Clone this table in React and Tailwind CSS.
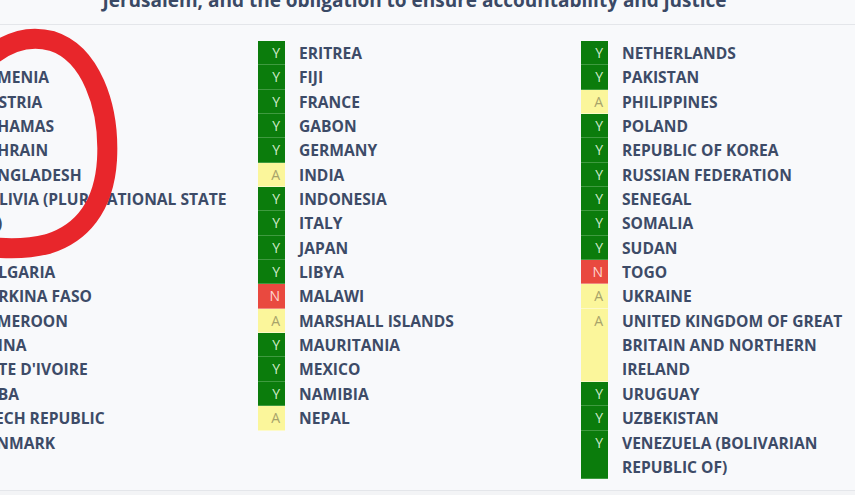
import React from "react";

const left = [
  { v: "Y", l: [""] },
  { v: "Y", l: ["ARMENIA"] },
  { v: "Y", l: ["AUSTRIA"] },
  { v: "Y", l: ["BAHAMAS"] },
  { v: "Y", l: ["BAHRAIN"] },
  { v: "Y", l: ["BANGLADESH"] },
  { v: "Y", l: ["BOLIVIA (PLURINATIONAL STATE", "OF)"] },
  { v: "Y", l: ["BRAZIL"] },
  { v: "Y", l: ["BULGARIA"] },
  { v: "Y", l: ["BURKINA FASO"] },
  { v: "Y", l: ["CAMEROON"] },
  { v: "Y", l: ["CHINA"] },
  { v: "Y", l: ["CÔTE D'IVOIRE"] },
  { v: "Y", l: ["CUBA"] },
  { v: "A", l: ["CZECH REPUBLIC"] },
  { v: "Y", l: ["DENMARK"] },
];

const middle = [
  { v: "Y", l: ["ERITREA"] },
  { v: "Y", l: ["FIJI"] },
  { v: "Y", l: ["FRANCE"] },
  { v: "Y", l: ["GABON"] },
  { v: "Y", l: ["GERMANY"] },
  { v: "A", l: ["INDIA"] },
  { v: "Y", l: ["INDONESIA"] },
  { v: "Y", l: ["ITALY"] },
  { v: "Y", l: ["JAPAN"] },
  { v: "Y", l: ["LIBYA"] },
  { v: "N", l: ["MALAWI"] },
  { v: "A", l: ["MARSHALL ISLANDS"] },
  { v: "Y", l: ["MAURITANIA"] },
  { v: "Y", l: ["MEXICO"] },
  { v: "Y", l: ["NAMIBIA"] },
  { v: "A", l: ["NEPAL"] },
];

const right = [
  { v: "Y", l: ["NETHERLANDS"] },
  { v: "Y", l: ["PAKISTAN"] },
  { v: "A", l: ["PHILIPPINES"] },
  { v: "Y", l: ["POLAND"] },
  { v: "Y", l: ["REPUBLIC OF KOREA"] },
  { v: "Y", l: ["RUSSIAN FEDERATION"] },
  { v: "Y", l: ["SENEGAL"] },
  { v: "Y", l: ["SOMALIA"] },
  { v: "Y", l: ["SUDAN"] },
  { v: "N", l: ["TOGO"] },
  { v: "A", l: ["UKRAINE"] },
  { v: "A", l: ["UNITED KINGDOM OF GREAT", "BRITAIN AND NORTHERN", "IRELAND"] },
  { v: "Y", l: ["URUGUAY"] },
  { v: "Y", l: ["UZBEKISTAN"] },
  { v: "Y", l: ["VENEZUELA (BOLIVARIAN", "REPUBLIC OF)"] },
];

function Badge({ v }) {
  if (v === "Y")
    return (
      <div className="w-[27px] shrink-0 bg-[#0b7c0c] text-[#cfe9c9] text-[14px] text-right pr-[5px] shadow-[inset_0_-1px_0_#3f9a40]">
        Y
      </div>
    );
  if (v === "N")
    return (
      <div className="w-[27px] shrink-0 bg-[#e9493f] text-[#ffd6cf] text-[14px] text-right pr-[5px] shadow-[inset_0_-1px_0_#f08a80]">
        N
      </div>
    );
  return (
    <div className="w-[27px] shrink-0 bg-[#fbf69b] text-[#a8a36a] text-[14px] text-right pr-[5px] shadow-[inset_0_-1px_0_#fdfac8]">
      A
    </div>
  );
}

function Column({ rows }) {
  return (
    <div className="flex flex-col">
      {rows.map((r, i) => (
        <div key={i} className="flex leading-[24.35px]">
          <Badge v={r.v} />
          <div className="pl-[14px] font-bold text-[#3d4b67] text-[15.6px] whitespace-nowrap">
            {r.l.map((line, j) => (
              <div key={j} className="h-[24.35px]">
                {line}
              </div>
            ))}
          </div>
        </div>
      ))}
    </div>
  );
}

export default function App() {
  return (
    <div
      className="relative w-[855px] h-[495px] overflow-hidden bg-[#f8f9fb]"
      style={{ fontFamily: '"Open Sans", "Noto Sans", sans-serif' }}
    >
      <div className="h-[25px] border-b border-[#e4e6ea] overflow-hidden">
        <div className="mt-[-9px] pr-[26px] text-center text-[19px] leading-[19px] font-bold text-[#3a4965] whitespace-nowrap">
          Jerusalem, and the obligation to ensure accountability and justice
        </div>
      </div>
      <div className="ml-[-65px] mt-[16px] grid grid-cols-[323px_323px_323px] h-[449px]">
        <Column rows={left} />
        <Column rows={middle} />
        <Column rows={right} />
      </div>
      <div className="border-t border-[#e4e6ea] h-[5px] bg-[#f3f4f6]" />
      <svg
        className="absolute left-0 top-0 pointer-events-none"
        width="140"
        height="280"
        viewBox="0 0 140 280"
      >
        <path
          d="M -8 55 C 10 41, 30 35, 52 41 C 90 53, 110 105, 107 160 C 104 208, 80 234, 48 244 C 28 249, 8 249, -10 247"
          fill="none"
          stroke="#e8262b"
          strokeWidth="20"
          strokeLinecap="round"
        />
      </svg>
    </div>
  );
}
